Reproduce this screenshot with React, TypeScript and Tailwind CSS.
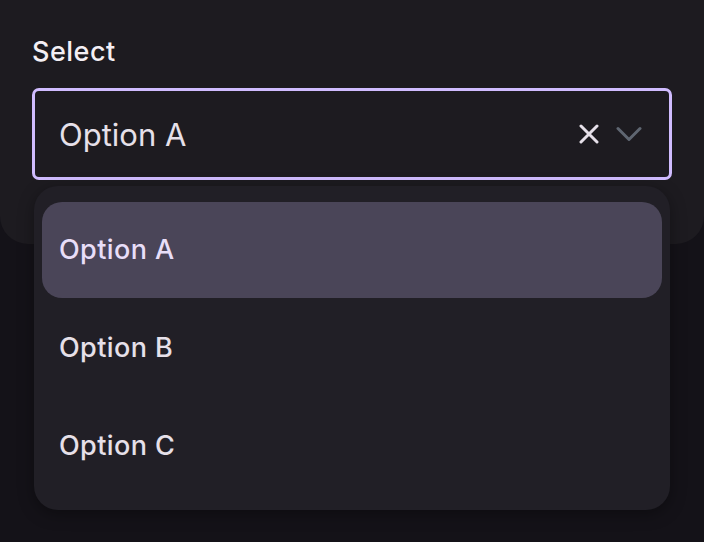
const options = ["Option A", "Option B", "Option C"];

export default function App() {
  const selected = "Option A";

  return (
    <div
      className="relative w-[704px] h-[542px] bg-[#141218] overflow-hidden"
      style={{ fontFamily: "Inter, 'Noto Sans', sans-serif" }}
    >
      {/* Panel */}
      <div className="h-[244px] bg-[#1d1b20] rounded-b-[28px] px-[32px] pt-[36px]">
        <label className="block text-[27px] leading-[32px] font-medium text-[#f4eff4] mb-[20px] tracking-[0.5px]">
          Select
        </label>

        {/* Trigger */}
        <div className="flex items-center h-[92px] border-[3px] border-[#d0bcff] rounded-[7px] bg-[#1d1b20] pl-[24px] pr-[27px]">
          <span className="flex-1 text-[31px] leading-none text-[#e6e0e9]">{selected}</span>
          <svg width="20" height="20" viewBox="0 0 20 20" fill="none" className="text-[#e6e0e9] mr-[17px]">
            <path d="M2 2l16 16M18 2L2 18" stroke="currentColor" strokeWidth="3" strokeLinecap="round" />
          </svg>
          <svg width="26" height="16" viewBox="0 0 26 16" fill="none" className="text-[#5f6671]">
            <path d="M2 2.5l11 11 11-11" stroke="currentColor" strokeWidth="3" strokeLinecap="round" strokeLinejoin="round" />
          </svg>
        </div>
      </div>

      {/* Menu */}
      <div className="absolute left-[34px] top-[186px] w-[636px] rounded-[24px] bg-[#211f26] px-[8px] py-[16px] flex flex-col gap-[2px] shadow-[0_4px_16px_rgba(0,0,0,0.35)]">
        {options.map((o) => (
          <div
            key={o}
            className={
              o === selected
                ? "h-[96px] flex items-center pl-[17px] rounded-[20px] bg-[#4a4558] text-[#e8def8] text-[27px] font-[450] tracking-[0.4px]"
                : "h-[96px] flex items-center pl-[17px] rounded-[20px] text-[#e6e0e9] text-[27px] font-[450] tracking-[0.4px]"
            }
          >
            {o}
          </div>
        ))}
      </div>
    </div>
  );
}
